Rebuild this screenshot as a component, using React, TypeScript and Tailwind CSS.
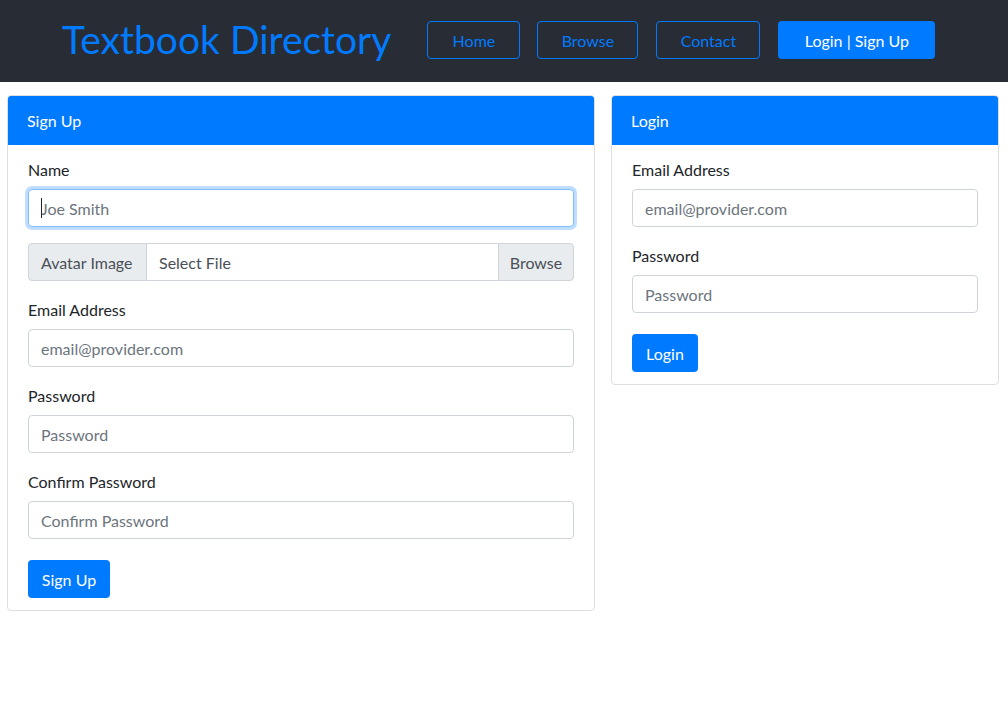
import React from "react";

const font = { fontFamily: '"Segoe UI", Lato, "Liberation Sans", sans-serif' };

function Field({ label, placeholder, type = "text" }: { label: string; placeholder: string; type?: string }) {
  return (
    <div className="mb-4">
      <label className="block pt-px mb-[7px] text-[16px] leading-6 text-[#212529]">{label}</label>
      <input
        type={type}
        placeholder={placeholder}
        className="block w-full h-[38px] px-3 pt-px text-[16px] text-[#495057] placeholder:text-[#6c757d] bg-white border border-[#ced4da] rounded-[4px] outline-none"
      />
    </div>
  );
}

function Card({ title, width, children }: { title: string; width: string; children: React.ReactNode }) {
  return (
    <div className={`${width} border border-[#dfdfdf] rounded-[4px] self-start overflow-hidden`}>
      <div className="h-[50px] bg-[#007bff] text-white text-[16px] flex items-center px-5 pt-[2px] -mt-px -mx-px">
        {title}
      </div>
      <div className="px-5 pt-3 pb-3">{children}</div>
    </div>
  );
}

export default function App() {
  return (
    <div style={font} className="min-h-screen bg-white">
      {/* Header */}
      <header className="h-[82px] bg-[#282c34] flex items-center pl-[62px]">
        <h1 className="text-[39px] leading-none text-[#007bff] -mt-1 mr-[36px]">Textbook Directory</h1>
        <nav className="flex items-center mb-[2px]">
          <button className="w-[93px] h-[38px] pt-px border border-[#007bff] rounded-[4px] text-[#007bff] text-[16px]">Home</button>
          <button className="ml-[17px] w-[101px] h-[38px] pt-px border border-[#007bff] rounded-[4px] text-[#007bff] text-[16px]">Browse</button>
          <button className="ml-[18px] w-[104px] h-[38px] pt-px border border-[#007bff] rounded-[4px] text-[#007bff] text-[16px]">Contact</button>
          <button className="ml-[18px] w-[157px] h-[38px] pt-px bg-[#007bff] rounded-[4px] text-white text-[16px]">Login | Sign Up</button>
        </nav>
      </header>

      {/* Forms */}
      <main className="flex gap-4 pt-[13px] pl-[7px]">
        <Card title="Sign Up" width="w-[588px]">
          <div className="mb-4">
            <label className="block pt-px mb-[7px] text-[16px] leading-6 text-[#212529]">Name</label>
            <div className="relative">
              <input
                type="text"
                placeholder="Joe Smith"
                className="block w-full h-[38px] px-3 pt-px text-[16px] text-[#495057] placeholder:text-[#6c757d] bg-white border border-[#80bdff] rounded-[4px] outline-none shadow-[0_0_0_3px_rgba(0,123,255,0.25)]"
              />
              <span className="absolute left-[13px] top-[9px] w-px h-[20px] bg-[#212529]" />
            </div>
          </div>
          <div className="mb-4 flex h-[38px] text-[16px]">
            <span className="w-[119px] flex items-center px-3 pt-px bg-[#e9ecef] border border-[#ced4da] rounded-l-[4px] text-[#495057]">
              Avatar Image
            </span>
            <span className="flex-1 flex items-center px-3 pt-px border-y border-[#ced4da] text-[#495057]">Select File</span>
            <span className="w-[76px] flex items-center justify-center pt-px bg-[#e9ecef] border border-[#ced4da] rounded-r-[4px] text-[#495057]">
              Browse
            </span>
          </div>
          <Field label="Email Address" placeholder="email@provider.com" type="email" />
          <Field label="Password" placeholder="Password" type="password" />
          <Field label="Confirm Password" placeholder="Confirm Password" type="password" />
          <button className="mt-[5px] w-[82px] h-[38px] pt-px bg-[#007bff] text-white text-[16px] rounded-[4px]">Sign Up</button>
        </Card>

        <Card title="Login" width="w-[388px]">
          <Field label="Email Address" placeholder="email@provider.com" type="email" />
          <Field label="Password" placeholder="Password" type="password" />
          <button className="mt-[5px] w-[66px] h-[38px] pt-px bg-[#007bff] text-white text-[16px] rounded-[4px]">Login</button>
        </Card>
      </main>
    </div>
  );
}
